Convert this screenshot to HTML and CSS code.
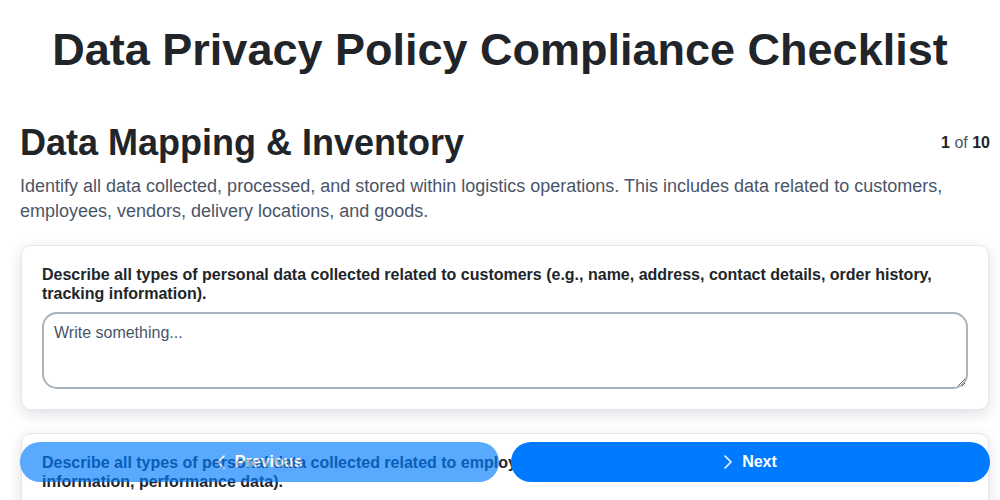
FILE: index.html
```html
<!DOCTYPE html>
<html lang="en">
<head>
<meta charset="utf-8">
<title>Data Privacy Policy Compliance Checklist</title>
<link rel="stylesheet" href="styles.css">
</head>
<body>
<main class="page">
  <h1 class="title">Data Privacy Policy Compliance Checklist</h1>
  <section class="step">
    <div class="step-head">
      <h2 class="step-title">Data Mapping &amp; Inventory</h2>
      <div class="step-count"><b>1</b> of <b>10</b></div>
    </div>
    <p class="step-desc">Identify all data collected, processed, and stored within logistics operations. This includes data related to customers, employees, vendors, delivery locations, and goods.</p>
    <div class="card">
      <label class="q-label" for="q1">Describe all types of personal data collected related to customers (e.g., name, address, contact details, order history, tracking information).</label>
      <textarea id="q1" class="q-input" placeholder="Write something..."></textarea>
    </div>
    <div class="card">
      <label class="q-label" for="q2">Describe all types of personal data collected related to employees (e.g., name, address, contact details, payroll information, performance data).</label>
      <textarea id="q2" class="q-input" placeholder="Write something..."></textarea>
    </div>
    <div class="card">
      <label class="q-label" for="q3">Describe all types of data collected related to vendors and delivery locations.</label>
      <textarea id="q3" class="q-input" placeholder="Write something..."></textarea>
    </div>
  </section>
</main>
<nav class="nav-bar">
  <button class="nav-btn nav-prev" type="button">
    <svg class="chev" width="8" height="14" viewBox="0 0 8 14" aria-hidden="true"><path d="M7 1 1 7l6 6" fill="none" stroke="currentColor" stroke-width="1.5" stroke-linecap="round" stroke-linejoin="round"/></svg>
    <span>Previous</span>
  </button>
  <button class="nav-btn nav-next" type="button">
    <svg class="chev" width="8" height="14" viewBox="0 0 8 14" aria-hidden="true"><path d="M1 1l6 6-6 6" fill="none" stroke="currentColor" stroke-width="1.5" stroke-linecap="round" stroke-linejoin="round"/></svg>
    <span>Next</span>
  </button>
</nav>
</body>
</html>
```

FILE: styles.css
```css
* { box-sizing: border-box; }
html, body { margin: 0; padding: 0; background: #ffffff; }
body {
  font-family: "Liberation Sans", Arial, sans-serif;
  color: #212529;
}
.page {
  padding: 23px 0 80px 0;
}
.title {
  margin: 0;
  padding: 0 20px;
  font-size: 45px;
  line-height: 54px;
  font-weight: 700;
  text-align: center;
  color: #212529;
}
.step {
  margin-top: 44px;
  padding: 0 10px 0 20px;
}
.step-head {
  display: flex;
  justify-content: space-between;
  align-items: center;
}
.step-title {
  margin: 0;
  font-size: 36px;
  line-height: 43px;
  font-weight: 700;
  color: #212529;
}
.step-count {
  font-size: 16px;
  color: #4a5568;
}
.step-count b { color: #212529; }
.step-desc {
  margin: 10px 0 21px;
  font-size: 18px;
  line-height: 25px;
  color: #4a5568;
}
.card {
  margin: 0 1px 23px 1px;
  padding: 19px 20px 20px;
  border: 1px solid #e6e8ee;
  border-radius: 10px;
  background: #fff;
  box-shadow: 0 4px 14px rgba(20, 30, 60, 0.14);
}
.q-label {
  display: block;
  font-size: 16px;
  line-height: 19px;
  font-weight: 700;
  color: #212529;
}
.q-input {
  display: block;
  width: 100%;
  height: 77px;
  margin-top: 9px;
  padding: 10px 10px 8px;
  border: 2px solid #a9b2bd;
  border-radius: 15px;
  font-family: "Liberation Sans", Arial, sans-serif;
  font-size: 16px;
  color: #212529;
  background: #fff;
  resize: vertical;
}
.q-input::placeholder { color: #4a5568; opacity: 1; }
.nav-bar {
  position: fixed;
  left: 20px;
  right: 10px;
  bottom: 18px;
  display: flex;
  gap: 12px;
}
.nav-btn {
  flex: 1;
  height: 40px;
  border: 0;
  border-radius: 20px;
  background: #007bff;
  color: #fff;
  font-family: "Liberation Sans", Arial, sans-serif;
  font-size: 16px;
  font-weight: 700;
  display: flex;
  align-items: center;
  justify-content: center;
  gap: 10px;
  cursor: pointer;
}
.nav-prev { opacity: 0.65; }
.chev { display: block; }
```
